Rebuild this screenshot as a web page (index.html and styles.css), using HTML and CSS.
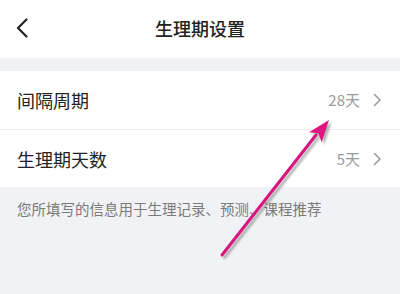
FILE: index.html
```html
<!DOCTYPE html>
<html lang="zh">
<head>
<meta charset="utf-8">
<title>生理期设置</title>
<link rel="stylesheet" href="styles.css">
</head>
<body>
<div class="page">
  <header class="topbar">
    <svg class="back" width="12" height="20" viewBox="0 0 12 20"><path d="M10.5 1.5 L2 10 L10.5 18.5" fill="none" stroke="#222" stroke-width="2.2" stroke-linecap="round" stroke-linejoin="round"/></svg>
    <h1 class="title">生理期设置</h1>
  </header>
  <div class="band"></div>
  <section class="list">
    <div class="row">
      <span class="label">间隔周期</span>
      <span class="value">28天</span>
      <svg class="chev" width="9" height="14" viewBox="0 0 9 14"><path d="M1.5 1.5 L7 7 L1.5 12.5" fill="none" stroke="#9a9a9a" stroke-width="1.6" stroke-linecap="round" stroke-linejoin="round"/></svg>
    </div>
    <div class="row">
      <span class="label">生理期天数</span>
      <span class="value">5天</span>
      <svg class="chev" width="9" height="14" viewBox="0 0 9 14"><path d="M1.5 1.5 L7 7 L1.5 12.5" fill="none" stroke="#9a9a9a" stroke-width="1.6" stroke-linecap="round" stroke-linejoin="round"/></svg>
    </div>
  </section>
  <p class="note">您所填写的信息用于生理记录、预测、课程推荐</p>
  <svg class="arrow" width="400" height="294" viewBox="0 0 400 294">
    <defs>
      <filter id="blur" x="-20%" y="-20%" width="140%" height="140%"><feGaussianBlur stdDeviation="1.2"/></filter>
    </defs>
    <g transform="translate(2.5 2.5)" opacity="0.45" filter="url(#blur)">
      <line x1="222" y1="255" x2="316" y2="135" stroke="#555" stroke-width="3" stroke-linecap="round"/>
      <polygon points="329,120 321.6,142.3 318.4,133.3 309,132.3" fill="#555"/>
    </g>
    <line x1="222" y1="255" x2="316" y2="135" stroke="#d8157f" stroke-width="3" stroke-linecap="round"/>
    <polygon points="329,120 321.6,142.3 318.4,133.3 309,132.3" fill="#e0157f"/>
  </svg>
</div>
</body>
</html>
```
FILE: styles.css
```css
html, body {
  margin: 0;
  padding: 0;
}
body {
  width: 400px;
  height: 294px;
  overflow: hidden;
  background: #f1f2f5;
  font-family: "Noto Sans CJK SC", "Noto Sans", sans-serif;
}
.page {
  position: relative;
  width: 400px;
  height: 294px;
}
.topbar {
  height: 58px;
  background: #fff;
  display: flex;
  align-items: center;
  justify-content: center;
  position: relative;
}
.back {
  position: absolute;
  left: 16px;
  top: 18px;
}
.title {
  margin: 0;
  font-size: 18px;
  font-weight: 500;
  color: #222;
  line-height: 24px;
  margin-top: -2px;
}
.band {
  height: 13px;
}
.list {
  background: #fff;
}
.row {
  height: 58px;
  display: flex;
  align-items: center;
  padding: 0 18px 0 17px;
  box-sizing: border-box;
}
.row + .row {
  border-top: 1px solid #ececec;
}
.label {
  flex: 1;
  font-size: 18px;
  color: #222;
  line-height: 24px;
}
.value {
  font-size: 15px;
  color: #9a9a9a;
  margin-right: 13px;
  line-height: 20px;
}
.chev {
  display: block;
}
.note {
  margin: 0;
  padding: 12px 17px 0;
  font-size: 14.5px;
  line-height: 20px;
  color: #7a7a7a;
}
.arrow {
  position: absolute;
  left: 0;
  top: 0;
  pointer-events: none;
}
```
